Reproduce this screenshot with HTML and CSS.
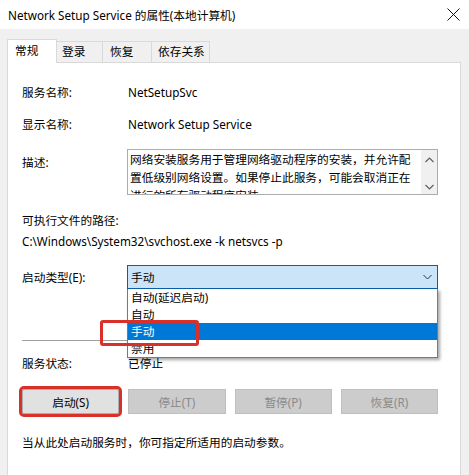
FILE: index.html
```html
<!DOCTYPE html>
<html lang="zh-CN">
<head>
<meta charset="utf-8">
<title>Network Setup Service 的属性(本地计算机)</title>
<link rel="stylesheet" href="styles.css">
</head>
<body>
<div class="window">
  <div class="titlebar">
    <span class="title">Network Setup Service 的属性(本地计算机)</span>
    <svg class="close" width="13" height="13" viewBox="0 0 13 13"><path d="M0.5 0.5 L12.5 12.5 M12.5 0.5 L0.5 12.5" stroke="#111" stroke-width="1" fill="none"/></svg>
  </div>
  <div class="client">
    <div class="tabs">
      <div class="tab active t1">常规</div>
      <div class="tab t2">登录</div>
      <div class="tab t3">恢复</div>
      <div class="tab t4">依存关系</div>
    </div>
    <div class="panel">
      <div class="field f-name"><span class="label">服务名称:</span><span class="value">NetSetupSvc</span></div>
      <div class="field f-display"><span class="label">显示名称:</span><span class="value">Network Setup Service</span></div>
      <div class="field f-desc">
        <span class="label desc-label">描述:</span>
        <div class="descbox">
          <div class="desctext">
            <div class="line">网络安装服务用于管理网络驱动程序的安装，并允许配</div>
            <div class="line">置低级别网络设置。如果停止此服务，可能会取消正在</div>
            <div class="line">进行的所有驱动程序安装。</div>
          </div>
          <div class="scrollbar">
            <svg width="9" height="6" viewBox="0 0 9 6"><path d="M0.5 5 L4.5 1 L8.5 5" stroke="#606060" stroke-width="1.2" fill="none"/></svg>
            <svg width="9" height="6" viewBox="0 0 9 6"><path d="M0.5 1 L4.5 5 L8.5 1" stroke="#606060" stroke-width="1.2" fill="none"/></svg>
          </div>
        </div>
      </div>
      <div class="path-label">可执行文件的路径:</div>
      <div class="path">C:\Windows\System32\svchost.exe -k netsvcs -p</div>
      <div class="field f-start">
        <span class="label start-label">启动类型(E):</span>
        <div class="combo-wrap">
          <div class="combo">
            <span>手动</span>
            <svg width="9" height="6" viewBox="0 0 9 6"><path d="M0.5 1 L4.5 5 L8.5 1" stroke="#333" stroke-width="1" fill="none"/></svg>
          </div>
          <ul class="dropdown">
            <li>自动(延迟启动)</li>
            <li>自动</li>
            <li class="selected">手动</li>
            <li>禁用</li>
          </ul>
          <div class="mark mark-option"></div>
        </div>
      </div>
      <div class="separator"></div>
      <div class="field f-status"><span class="label">服务状态:</span><span class="value">已停止</span></div>
      <div class="buttons">
        <button class="btn btn-start">启动(S)</button>
        <button class="btn" disabled>停止(T)</button>
        <button class="btn" disabled>暂停(P)</button>
        <button class="btn" disabled>恢复(R)</button>
      </div>
      <div class="hint">当从此处启动服务时，你可指定所适用的启动参数。</div>
    </div>
  </div>
</div>
</body>
</html>
```

FILE: styles.css
```css
html, body {
  margin: 0;
  padding: 0;
  overflow: hidden;
}
body {
  width: 469px;
  height: 475px;
  background: #f0f0f0;
  font-family: "Noto Sans", "Noto Sans CJK SC", sans-serif;
  font-size: 11.7px;
  color: #000;
}
.window {
  width: 469px;
  height: 475px;
  overflow: hidden;
}
.titlebar {
  height: 29px;
  background: #fff;
  display: flex;
  align-items: center;
  justify-content: space-between;
  padding: 0 9px 0 8px;
}
.title {
  font-size: 11.7px;
  line-height: 16px;
}
.client {
  padding-top: 10px;
}
.tabs {
  display: flex;
  align-items: flex-end;
  height: 23px;
  padding-left: 7px;
  position: relative;
  z-index: 2;
}
.tab {
  box-sizing: border-box;
  height: 21px;
  line-height: 19px;
  border: 1px solid #d9d9d9;
  border-bottom: none;
  border-left: none;
  background: #f0f0f0;
}
.tab.active {
  height: 24px;
  margin-bottom: -1px;
  background: #fff;
  border-left: 1px solid #d9d9d9;
  line-height: 20px;
}
.t1 { width: 50px; padding-left: 7px; }
.t2 { width: 46px; padding-left: 5px; }
.t3 { width: 49px; padding-left: 7px; }
.t4 { width: 58px; padding-left: 6px; }

.panel {
  box-sizing: border-box;
  margin-left: 7px;
  width: 454px;
  height: 440px;
  background: #fff;
  border: 1px solid #d9d9d9;
  padding: 20px 0 0 14px;
  position: relative;
  z-index: 1;
}
.field {
  display: grid;
  grid-template-columns: 105px 311px;
  align-items: start;
  line-height: 18px;
}
.value {
  padding-left: 1px;
}
.f-display { margin-top: 14px; }
.f-desc { margin-top: 16px; }
.desc-label { margin-top: 4px; }
.descbox {
  box-sizing: border-box;
  height: 46px;
  border: 1px solid #acacac;
  display: flex;
  overflow: hidden;
}
.desctext {
  flex: 1;
  padding-left: 2px;
  line-height: 18px;
  white-space: nowrap;
  overflow: hidden;
}
.scrollbar {
  width: 16px;
  background: #f0f0f0;
  display: flex;
  flex-direction: column;
  align-items: center;
  justify-content: space-between;
  padding: 7px 0 4px;
}
.path-label {
  margin-top: 16px;
  line-height: 18px;
}
.path {
  margin-top: 3px;
  line-height: 18px;
}
.f-start {
  margin-top: 15px;
}
.start-label {
  line-height: 24px;
}
.combo-wrap {
  position: relative;
}
.combo {
  box-sizing: border-box;
  height: 24px;
  border: 1px solid #0a5fa8;
  background: #cce4f7;
  display: flex;
  align-items: center;
  justify-content: space-between;
  padding: 0 5px 0 3px;
}
.dropdown {
  position: absolute;
  left: 0;
  top: 24px;
  width: 311px;
  box-sizing: border-box;
  margin: 0;
  padding: 0;
  list-style: none;
  background: #fff;
  border: 1px solid #7a7a7a;
  border-top: none;
  box-shadow: 2px 2px 3px rgba(0, 0, 0, 0.35);
  z-index: 5;
}
.dropdown li {
  height: 17px;
  line-height: 17px;
  padding-left: 3px;
}
.dropdown li.selected {
  background: #0078d7;
  color: #fff;
}
.mark {
  position: absolute;
  box-sizing: border-box;
  border: 3px solid #d9302a;
  border-radius: 3px;
  z-index: 6;
}
.mark-option {
  left: -27px;
  top: 55px;
  width: 99px;
  height: 26px;
}
.separator {
  margin-top: 51px;
  width: 416px;
  height: 1px;
  background: #a0a0a0;
}
.f-status {
  margin-top: 13px;
}
.buttons {
  margin-top: 17px;
  width: 416px;
  display: grid;
  grid-template-columns: repeat(4, 1fr);
  column-gap: 9px;
}
.btn {
  box-sizing: border-box;
  height: 25px;
  font: inherit;
  border: 1px solid #adadad;
  background: #e1e1e1;
  color: #000;
  padding: 0;
}
.btn:disabled {
  background: #cccccc;
  border-color: #bfbfbf;
  color: #8a8a8a;
}
.btn-start {
  outline: 3px solid #d9302a;
  outline-offset: 0;
  border-radius: 2px;
}
.hint {
  margin-top: 19px;
  line-height: 18px;
}
```
